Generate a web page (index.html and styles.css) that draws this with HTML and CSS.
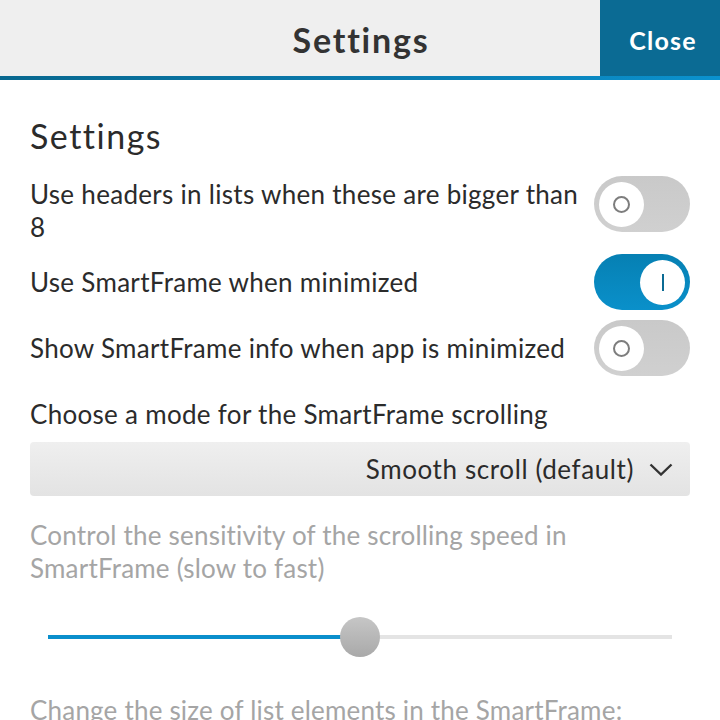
FILE: index.html
```html
<!DOCTYPE html>
<html lang="en">
<head>
<meta charset="utf-8">
<title>Settings</title>
<link rel="stylesheet" href="styles.css">
</head>
<body>
<header class="titlebar">
  <div class="titlebar-spacer"></div>
  <h1 class="titlebar-title">Settings</h1>
  <button class="titlebar-close">Close</button>
</header>
<div class="accent-line"></div>
<main class="content">
  <h2 class="section-title">Settings</h2>

  <div class="row row-top">
    <span class="label">Use headers in lists when these are bigger than 8</span>
    <span class="toggle">
      <span class="knob"><span class="off-mark"></span></span>
    </span>
  </div>

  <div class="row row-2">
    <span class="label">Use SmartFrame when minimized</span>
    <span class="toggle toggle-on">
      <span class="knob"><span class="on-mark"></span></span>
    </span>
  </div>

  <div class="row row-3">
    <span class="label">Show SmartFrame info when app is minimized</span>
    <span class="toggle">
      <span class="knob"><span class="off-mark"></span></span>
    </span>
  </div>

  <p class="label choose-label">Choose a mode for the SmartFrame scrolling</p>

  <div class="dropdown">
    <span class="dropdown-text">Smooth scroll (default)</span>
    <svg class="chevron" width="24" height="13" viewBox="0 0 24 13"><path d="M1.5 1.5 L12 11.5 L22.5 1.5" fill="none" stroke="#333" stroke-width="2.4" stroke-linejoin="miter"/></svg>
  </div>

  <p class="muted sensitivity">Control the sensitivity of the scrolling speed in SmartFrame (slow to fast)</p>

  <div class="slider">
    <div class="slider-track">
      <div class="slider-fill" style="width:50%"></div>
      <div class="slider-knob" style="left:50%"></div>
    </div>
  </div>

  <p class="muted size-label">Change the size of list elements in the SmartFrame:</p>
</main>
</body>
</html>
```

FILE: styles.css
```css
html, body {
  margin: 0;
  padding: 0;
  background: #ffffff;
  overflow: hidden;
}

body {
  font-family: "Lato", "Noto Sans", sans-serif;
  color: #2b2b2b;
  width: 720px;
  height: 720px;
}

.titlebar {
  display: grid;
  grid-template-columns: 120px 1fr 120px;
  height: 76px;
  background: #efefef;
}

.titlebar-title {
  margin: 0;
  align-self: center;
  text-align: center;
  font-size: 34px;
  font-weight: 700;
  letter-spacing: 1.8px;
  color: #333333;
  line-height: 76px;
  padding: 2px 0 0 2px;
}

.titlebar-close {
  border: none;
  margin: 0;
  padding: 3px 0 0 6px;
  background: #0b6b94;
  color: #ffffff;
  font-family: inherit;
  font-size: 25px;
  font-weight: 700;
  letter-spacing: 1.2px;
  height: 76px;
}

.accent-line {
  height: 4px;
  background: linear-gradient(to right, #08688f 0%, #0a7db2 60%, #0b92cf 100%);
}

.content {
  padding: 0 30px;
}

.section-title {
  margin: 36px 0 0 0;
  font-size: 34px;
  font-weight: 400;
  letter-spacing: 1.5px;
  line-height: 40px;
  color: #2b2b2b;
}

.label {
  font-size: 26px;
  line-height: 33px;
  letter-spacing: 0.3px;
  color: #2b2b2b;
}

.row {
  display: flex;
  align-items: center;
  gap: 14px;
}

.row .label {
  flex: 1;
}

.row-top {
  align-items: flex-start;
  margin-top: 20px;
}

.row-top .label {
  margin-top: 2px;
}

.row-2 {
  margin-top: 10px;
}

.row-3 {
  margin-top: 10px;
}

.toggle {
  flex: none;
  position: relative;
  width: 96px;
  height: 56px;
  border-radius: 28px;
  background: linear-gradient(to bottom, #c9c9c9, #d0d0d0);
  display: flex;
  align-items: center;
  padding: 0 5px;
  box-sizing: border-box;
}

.toggle-on {
  background: linear-gradient(to bottom, #0680b3, #0a90ca);
  justify-content: flex-end;
}

.knob {
  width: 45px;
  height: 45px;
  border-radius: 50%;
  background: #ffffff;
  display: flex;
  align-items: center;
  justify-content: center;
}

.off-mark {
  width: 13px;
  height: 13px;
  border: 2px solid #7d7d7d;
  border-radius: 50%;
}

.on-mark {
  width: 2px;
  height: 17px;
  background: #0b6b94;
}

.choose-label {
  margin: 22px 0 0 0;
}

.dropdown {
  margin-top: 11px;
  height: 54px;
  border-radius: 4px;
  background: linear-gradient(to bottom, #efefef, #e3e3e3);
  display: flex;
  align-items: center;
  justify-content: flex-end;
  gap: 15px;
  padding: 0 17px 0 0;
}

.dropdown-text {
  font-size: 26px;
  letter-spacing: 0.6px;
  color: #2b2b2b;
  line-height: 33px;
}

.chevron {
  display: block;
}

.muted {
  font-size: 26px;
  line-height: 33px;
  letter-spacing: 0.2px;
  color: #a5a5a5;
  margin: 0;
}

.sensitivity {
  margin-top: 23px;
  padding-right: 100px;
}

.slider {
  margin: 32px 18px 0 18px;
  height: 40px;
  display: flex;
  align-items: center;
}

.slider-track {
  position: relative;
  width: 100%;
  height: 4px;
  background: #e4e4e4;
}

.slider-fill {
  height: 100%;
  background: #0a8fcc;
}

.slider-knob {
  position: absolute;
  top: 50%;
  width: 40px;
  height: 40px;
  margin: -20px 0 0 -20px;
  border-radius: 50%;
  background: linear-gradient(to bottom, #c6c6c6, #a9a9a9);
}

.size-label {
  margin-top: 37px;
}
```
